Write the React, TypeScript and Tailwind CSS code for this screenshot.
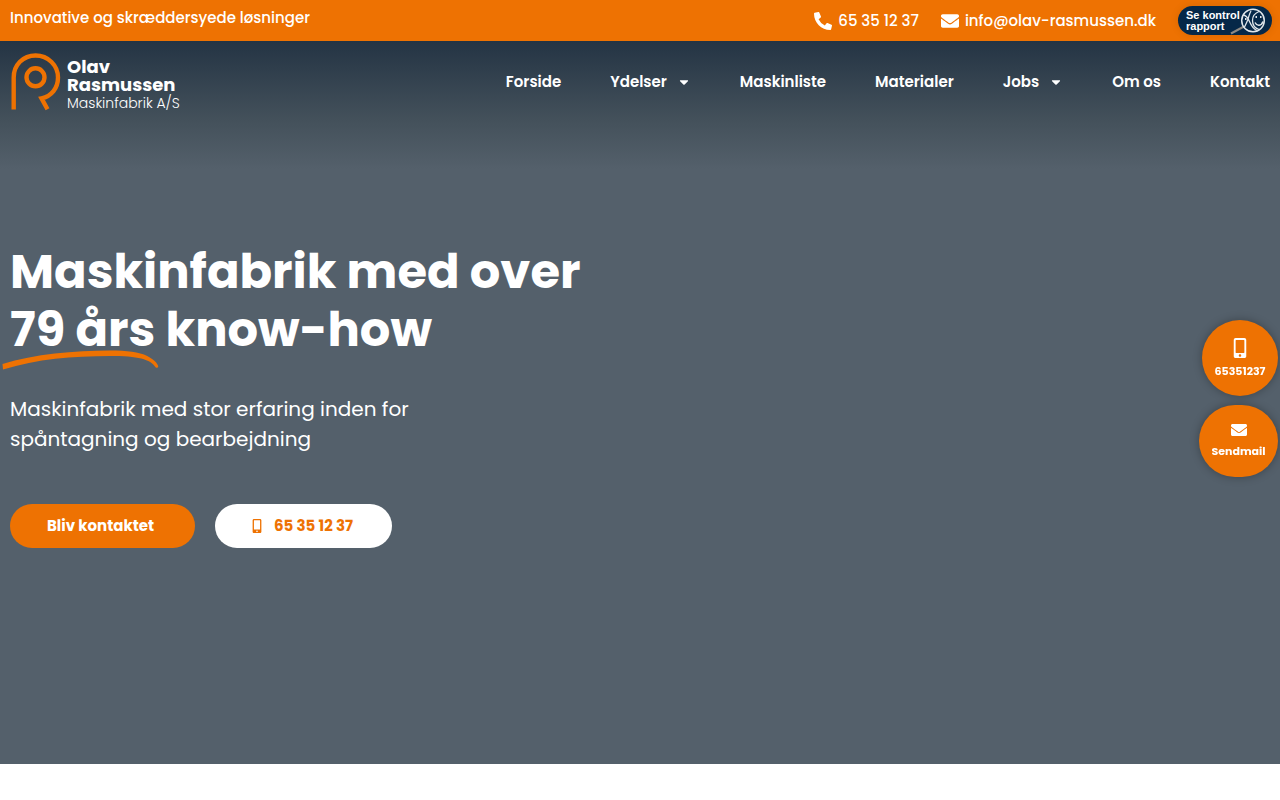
import { FaCaretDown, FaEnvelope, FaMobileAlt, FaPhoneAlt } from "react-icons/fa";

const PHONE = "65 35 12 37";
const EMAIL = "info@olav-rasmussen.dk";

const navItems = [
  { label: "Forside" },
  { label: "Ydelser", hasMenu: true },
  { label: "Maskinliste" },
  { label: "Materialer" },
  { label: "Jobs", hasMenu: true },
  { label: "Om os" },
  { label: "Kontakt" },
];

function Logo() {
  return (
    <a href="#" className="flex items-start gap-[5px] text-white">
      <svg viewBox="0 0 52 60" className="h-[60px] w-[52px]" fill="none" stroke="#ee7202" strokeWidth="4.4">
        <path d="M3.700 57.500V25.500C3.700 13 13 3.500 25.600 3.500S48 13.500 48 25.500C48 36 41.500 44.500 31.500 46.300L37.500 57.300" />
        <circle cx="25.500" cy="25.300" r="9" />
      </svg>
      <span className="flex flex-col pt-1.5">
        <span className="text-lg leading-[18px] font-bold">Olav</span>
        <span className="text-lg leading-[18px] font-bold">Rasmussen</span>
        <span className="text-sm leading-[18px] font-light">Maskinfabrik A/S</span>
      </span>
    </a>
  );
}

// Smiley badge linking to the food authority's inspection report.
function ReportBadge() {
  return (
    <a
      href="#"
      className="flex h-[29px] w-[94px] items-center justify-between rounded-full bg-[#052848] pr-1.5 pl-2 shadow-[0_0_8px_rgba(0,0,0,0.1)]"
    >
      <span className="font-['Liberation_Sans',Arial,sans-serif] text-[11px] leading-[11px] font-bold whitespace-nowrap text-white">
        Se kontrol
        <br />
        rapport
      </span>
      <svg viewBox="0 0 36 28" className="-ml-4 h-7 w-9 shrink-0" fill="none" stroke="#dfe6ea">
        <path d="M1 26.500L14 19.500" stroke="#8c8984" strokeWidth="2" />
        <circle cx="23" cy="13.500" r="11.300" strokeWidth="1.500" />
        <path d="M13 8c3 0 5 3 6.500 6.500S23 22 27 23.500M21 4c-2 3-2 6-3.500 9.500S15 19 14.500 20" strokeWidth="1.300" />
        <path d="M29 4.500c-5 2-6.500 5.500-6.500 9s2 7.500 6.500 9" strokeWidth="1.300" />
        <path d="M25 15.500c2 4 6.500 3.500 8-1" strokeWidth="1.500" />
        <path d="M25.500 10h1.500M30 10h1.500M15 12h1.500" strokeWidth="1.800" />
      </svg>
    </a>
  );
}

function TopBar() {
  return (
    <div className="flex min-h-[41px] items-start justify-between bg-[#ee7202] pr-2 pl-2.5 font-medium text-white">
      <p className="pt-2 text-[15px] leading-5">Innovative og skræddersyede løsninger</p>
      <div className="flex items-center pt-1.5 text-[15px] leading-5">
        <a href="tel:65351237" className="mr-[22px] flex items-center gap-1.5">
          <FaPhoneAlt className="size-[18px]" />
          {PHONE}
        </a>
        <a href={`mailto:${EMAIL}`} className="mr-[22px] flex items-center gap-1.5">
          <FaEnvelope className="size-[18px]" />
          {EMAIL}
        </a>
        <ReportBadge />
      </div>
    </div>
  );
}

function Header() {
  return (
    <header className="flex items-center justify-between px-2.5 pt-[11px]">
      <Logo />
      <nav className="flex items-center gap-[49px] text-[15px] leading-5 font-semibold text-white">
        {navItems.map((item) => (
          <a key={item.label} href="#" className="flex items-center gap-2.5">
            {item.label}
            {item.hasMenu && <FaCaretDown className="size-3.5" />}
          </a>
        ))}
      </nav>
    </header>
  );
}

function Hero() {
  return (
    <main className="px-2.5 pt-[131px] pb-[216px] text-white">
      <h1 className="text-5xl leading-[58px] font-bold">
        Maskinfabrik med over
        <br />
        <span className="relative inline-block">
          79 års
          <svg
            viewBox="0 0 156 22"
            preserveAspectRatio="none"
            className="absolute -right-1 -bottom-3 -left-2 h-[22px] w-[calc(100%+12px)]"
          >
            <path
              d="M0.500 15C32 5 72 1.500 107 1.500C124 1.500 136 3 144 7C150 10.500 154 13.500 155 17.500Q154.500 19.500 152.500 18.500C147 10 135 7 107 7C70 7 35 10 1 20.500Z"
              fill="#ee7202"
            />
          </svg>
        </span>{" "}
        know-how
      </h1>
      <p className="mt-[35px] max-w-[420px] text-xl leading-[30px]">
        Maskinfabrik med stor erfaring inden for spåntagning og bearbejdning
      </p>
      <div className="mt-[50px] flex gap-5 text-[15px] leading-5 font-bold">
        <a href="#" className="flex h-11 w-[185px] items-center justify-center rounded-full bg-[#ee7202] pr-1">
          Bliv kontaktet
        </a>
        <a
          href="tel:65351237"
          className="flex h-11 w-[177px] items-center justify-center gap-2.5 rounded-full bg-white pr-1 text-[#ee7202]"
        >
          <FaMobileAlt className="size-3.5" />
          {PHONE}
        </a>
      </div>
    </main>
  );
}

// Round shortcuts that stay at the right edge while the page scrolls.
function FloatingContacts() {
  return (
    <div className="fixed top-80 right-0.5 flex flex-col items-end gap-[9px] text-[11px] leading-4 font-bold text-white">
      <a
        href="tel:65351237"
        className="flex size-[76px] flex-col items-center justify-center gap-[5px] rounded-full bg-[#ee7202] shadow-[0_0_10px_rgba(0,0,0,0.3)]"
      >
        <FaMobileAlt className="size-5" />
        65351237
      </a>
      <a
        href={`mailto:${EMAIL}`}
        className="flex h-[72px] w-[79px] flex-col items-center justify-center gap-[5px] rounded-[36px] bg-[#ee7202] pb-0.5 shadow-[0_0_10px_rgba(0,0,0,0.3)]"
      >
        <FaEnvelope className="size-4" />
        Sendmail
      </a>
    </div>
  );
}

export default function App() {
  return (
    <div className="bg-white font-[Poppins,Inter,sans-serif]">
      <TopBar />
      <div className="bg-[#54606b] bg-[linear-gradient(to_bottom,#243444_0px,#44515b_80px,#54606b_128px)]">
        <Header />
        <Hero />
      </div>
      <FloatingContacts />
    </div>
  );
}
